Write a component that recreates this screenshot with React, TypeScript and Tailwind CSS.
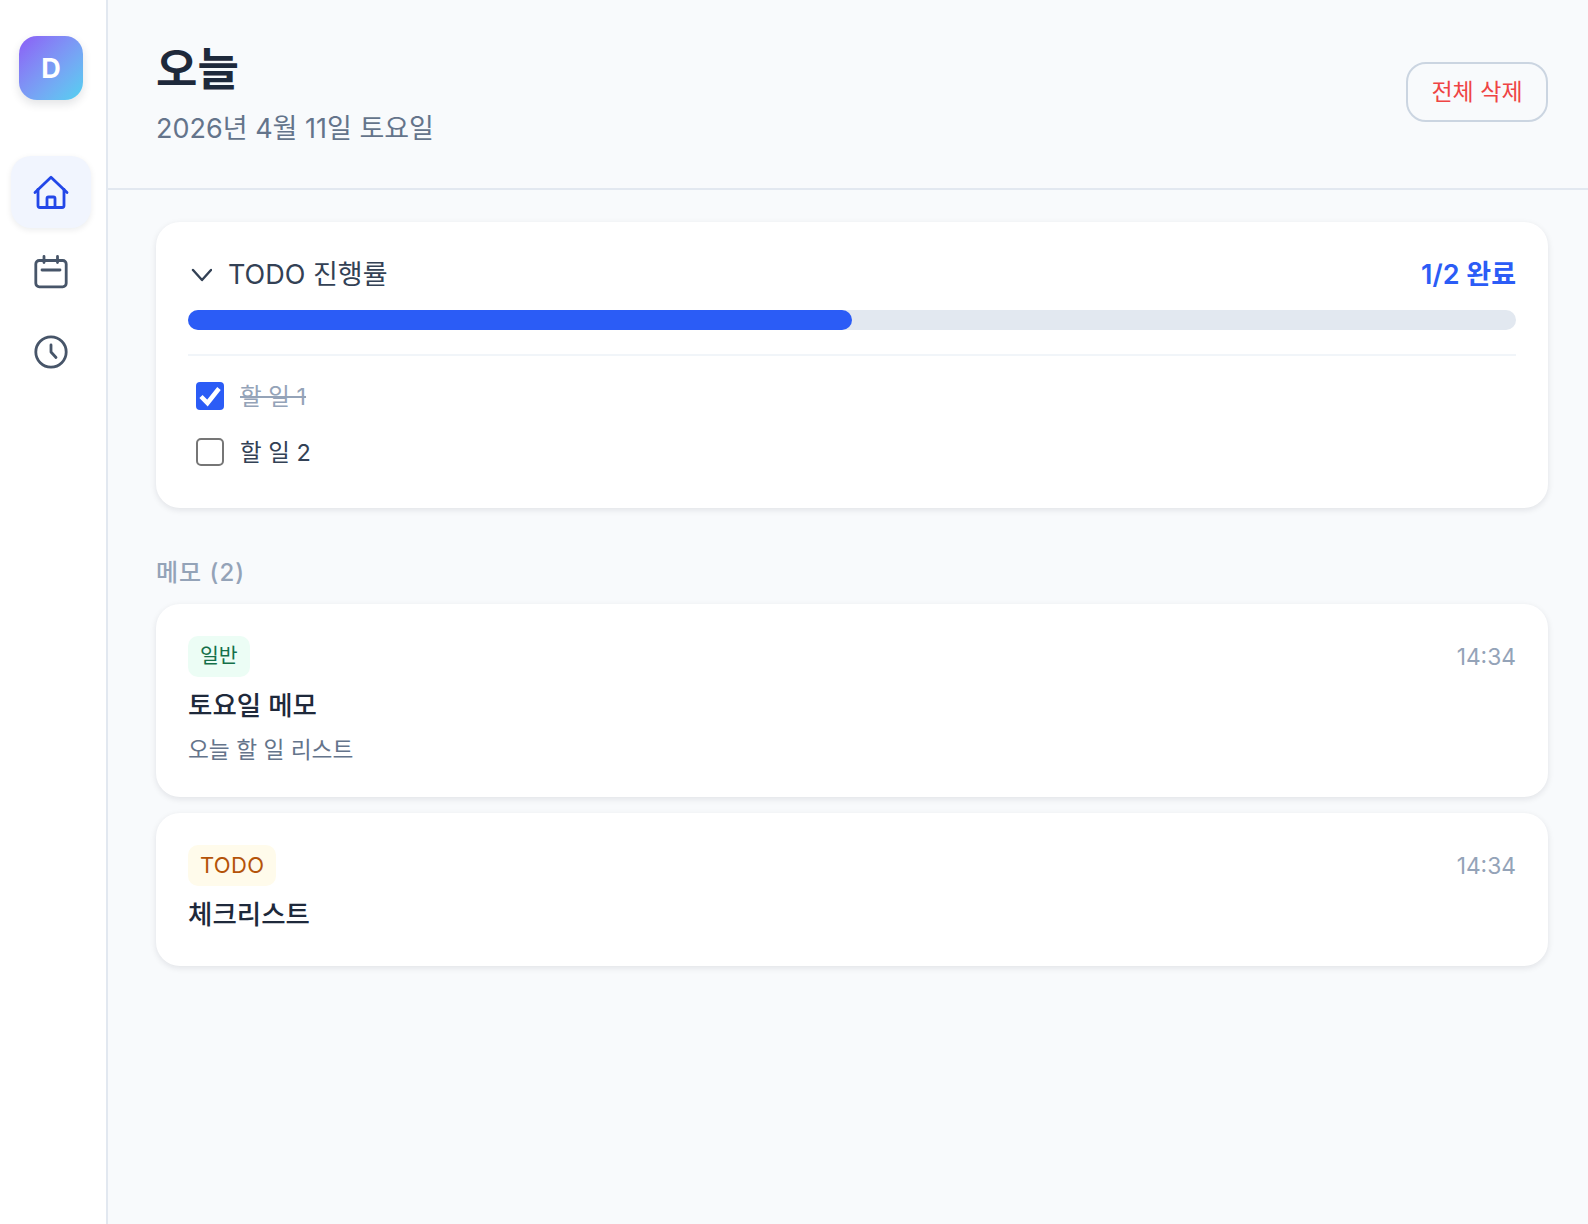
const font = "font-['Inter','Noto_Sans_CJK_KR',sans-serif]";

function HomeIcon() {
  return (
    <svg width="36" height="36" viewBox="0 0 36 36" fill="none" stroke="#2347e8" strokeWidth="2.8" strokeLinecap="round" strokeLinejoin="round">
      <path d="M2 18.5 18 3.2l16 15.3" />
      <path d="M5 15.5V31.5a2 2 0 0 0 2 2h22a2 2 0 0 0 2-2V15.5" />
      <path d="M14 33.5V24.5a1.5 1.5 0 0 1 1.5-1.5h5a1.5 1.5 0 0 1 1.5 1.5v9" />
    </svg>
  );
}

function CalendarIcon() {
  return (
    <svg width="36" height="36" viewBox="0 0 36 36" fill="none" stroke="#475569" strokeWidth="2.8" strokeLinecap="round" strokeLinejoin="round">
      <rect x="2.8" y="6.5" width="30.4" height="26.3" rx="3.5" />
      <path d="M11 2.5v6M24.5 2.5v6M9 16h18" />
    </svg>
  );
}

function ClockIcon() {
  return (
    <svg width="36" height="36" viewBox="0 0 36 36" fill="none" stroke="#475569" strokeWidth="2.8" strokeLinecap="round" strokeLinejoin="round">
      <circle cx="18" cy="18" r="15.2" />
      <path d="M18 11v7l5 5.5" />
    </svg>
  );
}

function Memo({ tag, tagClass, title, body }: { tag: string; tagClass: string; title: string; body?: string }) {
  return (
    <div className="bg-white rounded-[24px] shadow-[0_2px_6px_rgba(15,23,42,0.1)] p-8">
      <div className="flex items-center justify-between">
        <span className={`h-[41px] px-3 rounded-[10px] flex items-center ${tagClass}`}>{tag}</span>
        <span className="pt-[1px] text-[22.8px] text-[#94a3b8]">14:34</span>
      </div>
      <div className={`mt-[9px] text-[26.5px] leading-[38px] font-medium text-[#1e293b] ${body ? "" : "pb-[1px]"}`}>{title}</div>
      {body && <div className="mt-[10px] text-[22.7px] leading-[31px] text-[#64748b]">{body}</div>}
    </div>
  );
}

export default function App() {
  return (
    <div className={`${font} flex min-h-screen bg-[#f8fafc]`}>
      <aside className="w-[108px] shrink-0 bg-white border-r-2 border-[#e2e8f0] flex flex-col items-center pt-9 pr-1">
        <div className="w-16 h-16 pt-[2px] rounded-[18px] bg-gradient-to-br from-[#8b5cf6] to-[#4fd1f0] shadow-[0_4px_10px_rgba(15,23,42,0.12)] flex items-center justify-center text-white text-[27px] font-bold">
          D
        </div>
        <nav className="mt-14 flex flex-col items-center gap-2">
          <div className="w-20 h-[72px] rounded-[20px] bg-[#f1f5fe] shadow-[0_2px_6px_rgba(15,23,42,0.08)] flex items-center justify-center">
            <HomeIcon />
          </div>
          <div className="w-20 h-[72px] flex items-center justify-center">
            <CalendarIcon />
          </div>
          <div className="w-20 h-[72px] flex items-center justify-center">
            <ClockIcon />
          </div>
        </nav>
      </aside>

      <main className="flex-1">
        <header className="h-[190px] border-b-2 border-[#e2e8f0] pl-12 pr-10 pt-10 flex justify-between">
          <div>
            <h1 className="mt-[2px] text-[45px] leading-[56px] font-bold text-[#1e293b]">오늘</h1>
            <p className="mt-[13px] text-[27px] leading-[36px] text-[#64748b]">2026년 4월 11일 토요일</p>
          </div>
          <button className="mt-[22px] w-[142px] h-[60px] rounded-[20px] border-2 border-[#cbd5e1] text-[23px] text-[#ef4444]">
            전체 삭제
          </button>
        </header>

        <div className="pl-12 pr-10 pt-8">
          <section className="bg-white rounded-[24px] shadow-[0_2px_6px_rgba(15,23,42,0.1)] p-8">
            <div className="flex items-center justify-between h-[41px]">
              <div className="flex items-center gap-4 text-[27px] font-normal text-[#334155]">
                <svg width="24" height="24" viewBox="0 0 24 24" fill="none" stroke="#334155" strokeWidth="2.4" strokeLinecap="round" strokeLinejoin="round">
                  <path d="M5 7l9 10 9-10" />
                </svg>
                <span className="pt-[2px]">TODO 진행률</span>
              </div>
              <span className="pt-[2px] text-[27px] font-semibold text-[#2b5cf6]">1/2 완료</span>
            </div>
            <div className="mt-[15px] h-5 rounded-full bg-[#e2e8f0]">
              <div className="h-5 w-1/2 rounded-full bg-[#2b5cf6]" />
            </div>
            <div className="mt-6 border-t-2 border-[#f1f5f9] pt-[26px] pb-[10px] px-2 flex flex-col gap-7">
              <label className="flex items-center gap-4 h-7 text-[23.5px] text-[#94a3b8] line-through">
                <span className="w-7 h-7 rounded-[4px] bg-[#2b5cf6]">
                  <svg width="28" height="28" viewBox="0 0 28 28" fill="none" stroke="#fff" strokeWidth="4.5">
                    <path d="M5 14.5l6.5 6.5L23 6.5" />
                  </svg>
                </span>
                <span className="pt-[2px]">할 일 1</span>
              </label>
              <label className="flex items-center gap-4 h-7 text-[23.5px] text-[#334155]">
                <span className="w-7 h-7 rounded-[5px] border-2 border-[#767676] bg-white" />
                <span className="pt-[2px]">할 일 2</span>
              </label>
            </div>
          </section>

          <h2 className="mt-[49px] text-[24px] leading-[32px] tracking-[1px] font-medium text-[#94a3b8]">메모 (2)</h2>

          <div className="mt-[15px] flex flex-col gap-4">
            <Memo tag="일반" tagClass="text-[20.5px] bg-[#ecfdf5] text-[#15704a]" title="토요일 메모" body="오늘 할 일 리스트" />
            <Memo tag="TODO" tagClass="text-[22px] tracking-[0.3px] bg-[#fffbeb] text-[#b45309]" title="체크리스트" />
          </div>
        </div>
      </main>
    </div>
  );
}
